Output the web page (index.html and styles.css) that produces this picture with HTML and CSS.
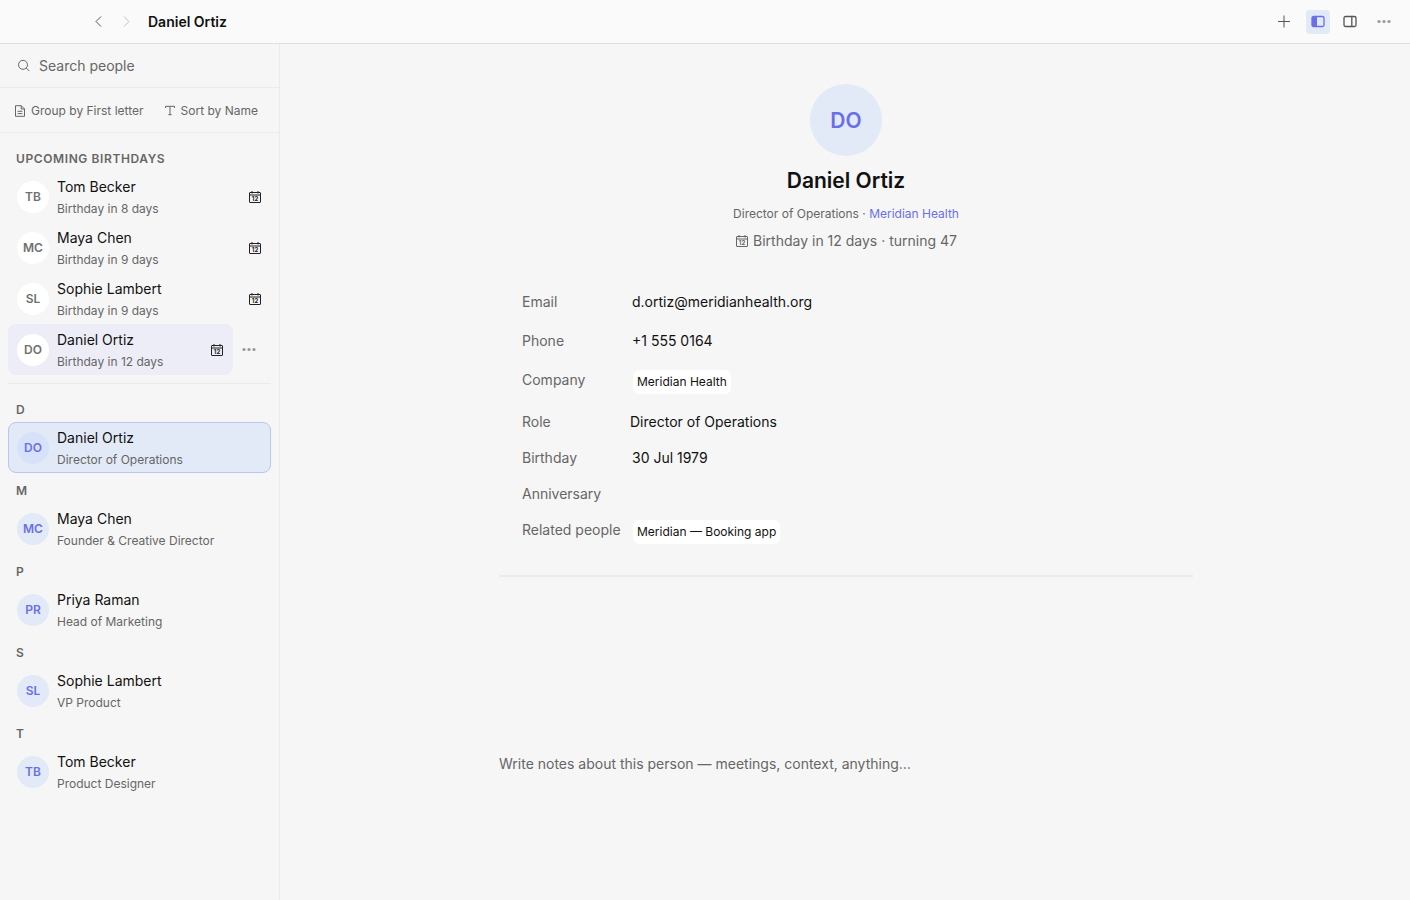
FILE: index.html
```html
<!DOCTYPE html>
<html lang="en">
<head>
<meta charset="utf-8">
<meta name="viewport" content="width=device-width, initial-scale=1">
<title>Daniel Ortiz</title>
<link rel="stylesheet" href="styles.css">
</head>
<body>
<svg class="sprite" aria-hidden="true">
  <symbol id="calendar" viewBox="0 0 14 14">
    <path d="M2 2.5h10a.5.5 0 0 1 .5.5v9a.5.5 0 0 1-.5.5H2a.5.5 0 0 1-.5-.5V3a.5.5 0 0 1 .5-.5zM1.5 5h11M4 1v2.5M10 1v2.5" fill="none" stroke="currentColor" stroke-width="1"/>
    <text x="7" y="11.2" text-anchor="middle" class="calendar-day">12</text>
  </symbol>
  <symbol id="dots" viewBox="0 0 14 14">
    <g fill="currentColor"><circle cx="2" cy="6.5" r="1.6"/><circle cx="7" cy="6.5" r="1.6"/><circle cx="12" cy="6.5" r="1.6"/></g>
  </symbol>
</svg>
<div class="app">
  <header class="topbar">
    <nav class="history">
      <button class="icon-button" aria-label="Back"><svg class="icon" viewBox="0 0 14 14"><path d="M10 1.5 5 6.5l5 5" class="line"/></svg></button>
      <button class="icon-button faint" aria-label="Forward"><svg class="icon" viewBox="0 0 14 14"><path d="m5 1.5 5 5-5 5" class="line"/></svg></button>
    </nav>
    <div class="page-name">Daniel Ortiz</div>
    <div class="actions">
      <button class="icon-button" aria-label="Add"><svg class="icon" viewBox="0 0 14 14"><path d="M7 .5v12M1 6.5h12" class="line"/></svg></button>
      <div class="panel-toggles">
        <button class="icon-button active" aria-label="Toggle left panel" aria-pressed="true"><svg class="icon" viewBox="0 0 14 14"><rect x="1" y="1.5" width="12" height="10" rx="1.5" class="line bold"/><path d="M1 3A1.5 1.5 0 0 1 2.5 1.5H6v10H2.5A1.5 1.5 0 0 1 1 10z" fill="currentColor"/></svg></button>
        <button class="icon-button" aria-label="Toggle right panel"><svg class="icon" viewBox="0 0 14 14"><rect x="1" y="1.5" width="12" height="10" rx="1.5" class="line bold"/><path d="M8.8 1.5v10" class="line bold"/></svg></button>
      </div>
      <button class="icon-button muted" aria-label="More"><svg class="icon"><use href="#dots"/></svg></button>
    </div>
  </header>

  <div class="body">
    <aside class="sidebar">
      <label class="search">
        <svg class="icon" viewBox="0 0 14 14"><circle cx="6" cy="5.8" r="4.5" class="line"/><path d="m9.3 9.1 3 3" class="line"/></svg>
        <input type="search" placeholder="Search people" aria-label="Search people">
      </label>
      <div class="list-options">
        <button class="option"><svg class="icon small" viewBox="0 0 12 12"><path d="M1.5.7h5.8l3.2 3.2v7.4h-9zM7.2.7V4h3.3M3.6 6.3h4.8M3.6 8.6h4.8" class="line"/></svg>Group by First letter</button>
        <button class="option"><svg class="icon small" viewBox="0 0 12 12"><path d="M1.5 3V1.3h9V3M6 1.3v8.4M4.3 9.7h3.4" class="line"/></svg>Sort by Name</button>
      </div>
      <div class="people">
        <section class="upcoming">
          <h2 class="group-title upcoming-title">UPCOMING BIRTHDAYS</h2>
          <button class="person"><span class="avatar plain">TB</span><span class="person-text"><span class="name">Tom Becker</span><span class="detail">Birthday in 8 days</span></span><svg class="icon"><use href="#calendar"/></svg></button>
          <button class="person"><span class="avatar plain">MC</span><span class="person-text"><span class="name">Maya Chen</span><span class="detail">Birthday in 9 days</span></span><svg class="icon"><use href="#calendar"/></svg></button>
          <button class="person"><span class="avatar plain">SL</span><span class="person-text"><span class="name">Sophie Lambert</span><span class="detail">Birthday in 9 days</span></span><svg class="icon"><use href="#calendar"/></svg></button>
          <div class="person-row">
            <button class="person hovered"><span class="avatar plain">DO</span><span class="person-text"><span class="name">Daniel Ortiz</span><span class="detail">Birthday in 12 days</span></span><svg class="icon"><use href="#calendar"/></svg></button>
            <button class="icon-button muted" aria-label="More options"><svg class="icon"><use href="#dots"/></svg></button>
          </div>
        </section>
        <section>
          <h2 class="group-title">D</h2>
          <button class="person selected"><span class="avatar">DO</span><span class="person-text"><span class="name">Daniel Ortiz</span><span class="detail">Director of Operations</span></span></button>
        </section>
        <section>
          <h2 class="group-title">M</h2>
          <button class="person"><span class="avatar">MC</span><span class="person-text"><span class="name">Maya Chen</span><span class="detail">Founder &amp; Creative Director</span></span></button>
        </section>
        <section>
          <h2 class="group-title">P</h2>
          <button class="person"><span class="avatar">PR</span><span class="person-text"><span class="name">Priya Raman</span><span class="detail">Head of Marketing</span></span></button>
        </section>
        <section>
          <h2 class="group-title">S</h2>
          <button class="person"><span class="avatar">SL</span><span class="person-text"><span class="name">Sophie Lambert</span><span class="detail">VP Product</span></span></button>
        </section>
        <section>
          <h2 class="group-title">T</h2>
          <button class="person"><span class="avatar">TB</span><span class="person-text"><span class="name">Tom Becker</span><span class="detail">Product Designer</span></span></button>
        </section>
      </div>
    </aside>

    <main class="main">
      <article class="profile">
        <header class="profile-header">
          <span class="avatar large">DO</span>
          <h1 class="profile-name">Daniel Ortiz</h1>
          <p class="profile-role">Director of Operations · <a href="#company">Meridian Health</a></p>
          <p class="profile-birthday"><svg class="icon"><use href="#calendar"/></svg>Birthday in 12 days · turning 47</p>
        </header>
        <div class="fields">
          <div class="field tall"><label for="email">Email</label><input id="email" type="email" value="d.ortiz@meridianhealth.org"></div>
          <div class="field tall"><label for="phone">Phone</label><input id="phone" type="tel" value="+1 555 0164"></div>
          <div class="field linked company"><label for="company">Company</label><button id="company" class="chip">Meridian Health</button></div>
          <div class="field"><label for="role">Role</label><input id="role" class="flush" type="text" value="Director of Operations"></div>
          <div class="field"><label for="birthday">Birthday</label><input id="birthday" type="text" value="30 Jul 1979"></div>
          <div class="field"><label for="anniversary">Anniversary</label><input id="anniversary" type="text"></div>
          <div class="field linked"><label for="related">Related people</label><button id="related" class="chip">Meridian — Booking app</button></div>
        </div>
        <textarea class="notes" aria-label="Notes" placeholder="Write notes about this person — meetings, context, anything…"></textarea>
      </article>
    </main>
  </div>
</div>
</body>
</html>
```
FILE: styles.css
```css
:root {
  --text: #111;
  --secondary: #666;
  --accent: #6a6fe8;
  --tint: #e2e9f7;
  --rule: #ebebeb;
}

* { box-sizing: border-box; }

body {
  margin: 0;
  background: #f6f6f6;
  color: var(--text);
  font: 14px/20px Inter, "Liberation Sans", sans-serif;
}

button, input, textarea {
  font: inherit;
  color: inherit;
  background: none;
  border: 0;
  padding: 0;
  margin: 0;
  outline: 0;
}

h1, h2, p { margin: 0; }
.sprite { display: none; }
.icon { width: 14px; height: 14px; flex: none; }
.icon.small { width: 12px; height: 12px; }
.line { fill: none; stroke: currentColor; stroke-width: 1; }
.line.bold { stroke-width: 1.3; }
.calendar-day { font: 700 6px Inter, sans-serif; fill: currentColor; }

.app { display: flex; flex-direction: column; min-height: 100vh; }

.topbar {
  display: flex;
  align-items: center;
  height: 44px;
  padding: 0 14px 0 86px;
  background: #fafafa;
  border-bottom: 1px solid #dfdfdf;
}

.history { display: flex; gap: 4px; }
.page-name { flex: 1; margin-left: 10px; font-weight: 600; }
.actions { display: flex; align-items: center; gap: 10px; }
.panel-toggles { display: flex; gap: 8px; }

.icon-button {
  display: grid;
  place-items: center;
  flex: none;
  width: 24px;
  height: 24px;
  border-radius: 4px;
  color: #555;
}
.icon-button.faint { color: #c4c4c4; }
.icon-button.muted { color: #999; }
.icon-button.active { background: var(--tint); color: var(--accent); }

.body { display: flex; flex: 1; }

.sidebar { flex: 0 0 280px; border-right: 1px solid var(--rule); }

.search {
  display: flex;
  align-items: center;
  gap: 8px;
  height: 44px;
  padding: 0 17px;
  border-bottom: 1px solid var(--rule);
  color: var(--secondary);
}
.search input { flex: 1; min-width: 0; }
input::placeholder, textarea::placeholder { color: var(--secondary); opacity: 1; }

.list-options {
  display: flex;
  align-items: center;
  gap: 20px;
  height: 45px;
  padding: 2px 14px 0;
  border-bottom: 1px solid var(--rule);
}
.option {
  display: flex;
  align-items: center;
  gap: 5px;
  color: var(--secondary);
  font-size: 12px;
  white-space: nowrap;
}

.people { padding: 0 8px; }
.group-title {
  padding: 8px 8px 2px;
  color: var(--secondary);
  font-size: 12px;
  line-height: 20px;
  font-weight: 600;
}
.upcoming-title { padding-top: 16px; letter-spacing: 0.05em; }
.upcoming { padding-bottom: 8px; margin-bottom: 8px; border-bottom: 1px solid var(--rule); }

.person {
  display: flex;
  align-items: center;
  gap: 8px;
  width: 100%;
  padding: 3px 8px 2px;
  border: 1px solid transparent;
  border-radius: 8px;
  text-align: left;
}
.person .icon { color: #222; }
.person.hovered { background: #ededf8; }
.person.selected { background: var(--tint); border-color: #bcc4f2; }
.person-row { display: flex; align-items: center; gap: 4px; padding-right: 10px; }
.person-text { flex: 1; display: flex; flex-direction: column; }
.name { line-height: 24px; }
.detail { font-size: 12px; color: var(--secondary); }

.avatar {
  display: grid;
  place-items: center;
  flex: none;
  width: 32px;
  height: 32px;
  border-radius: 50%;
  background: var(--tint);
  color: var(--accent);
  font-size: 12px;
  font-weight: 600;
}
.avatar.plain { background: #fff; color: #707070; }
.selected .avatar { background: #d7e2fa; }
.avatar.large { width: 72px; height: 72px; padding-top: 2px; font-size: 21px; }

.main { flex: 1; padding: 40px 24px 40px 26px; }
.profile { max-width: 694px; margin: 0 auto; }

.profile-header { display: flex; flex-direction: column; align-items: center; }
.profile-name { margin-top: 10px; font-size: 21px; line-height: 30px; font-weight: 600; }
.profile-role { margin-top: 8px; font-size: 12px; color: var(--secondary); }
.profile-role a { color: var(--accent); text-decoration: none; }
.profile-birthday {
  display: flex;
  align-items: center;
  gap: 4px;
  margin-top: 7px;
  color: var(--secondary);
}

.fields { margin-top: 31px; padding: 0 23px 23px; border-bottom: 2px solid var(--rule); }
.field { display: grid; grid-template-columns: 108px 1fr; align-items: center; min-height: 36px; }
.field.tall { min-height: 39px; }
.field.linked { align-items: start; padding: 8px 0; }
.field.company { padding: 10px 0; }
.field label { color: var(--secondary); }
.field input { width: 100%; padding: 0 2px; }
.field input.flush { padding: 0; }
.chip {
  justify-self: start;
  margin-left: 3px;
  padding: 2px 4px;
  border-radius: 6px;
  background: #fff;
  font-size: 12px;
}

.notes { display: block; width: 100%; height: 60px; margin-top: 177px; resize: none; }
```
